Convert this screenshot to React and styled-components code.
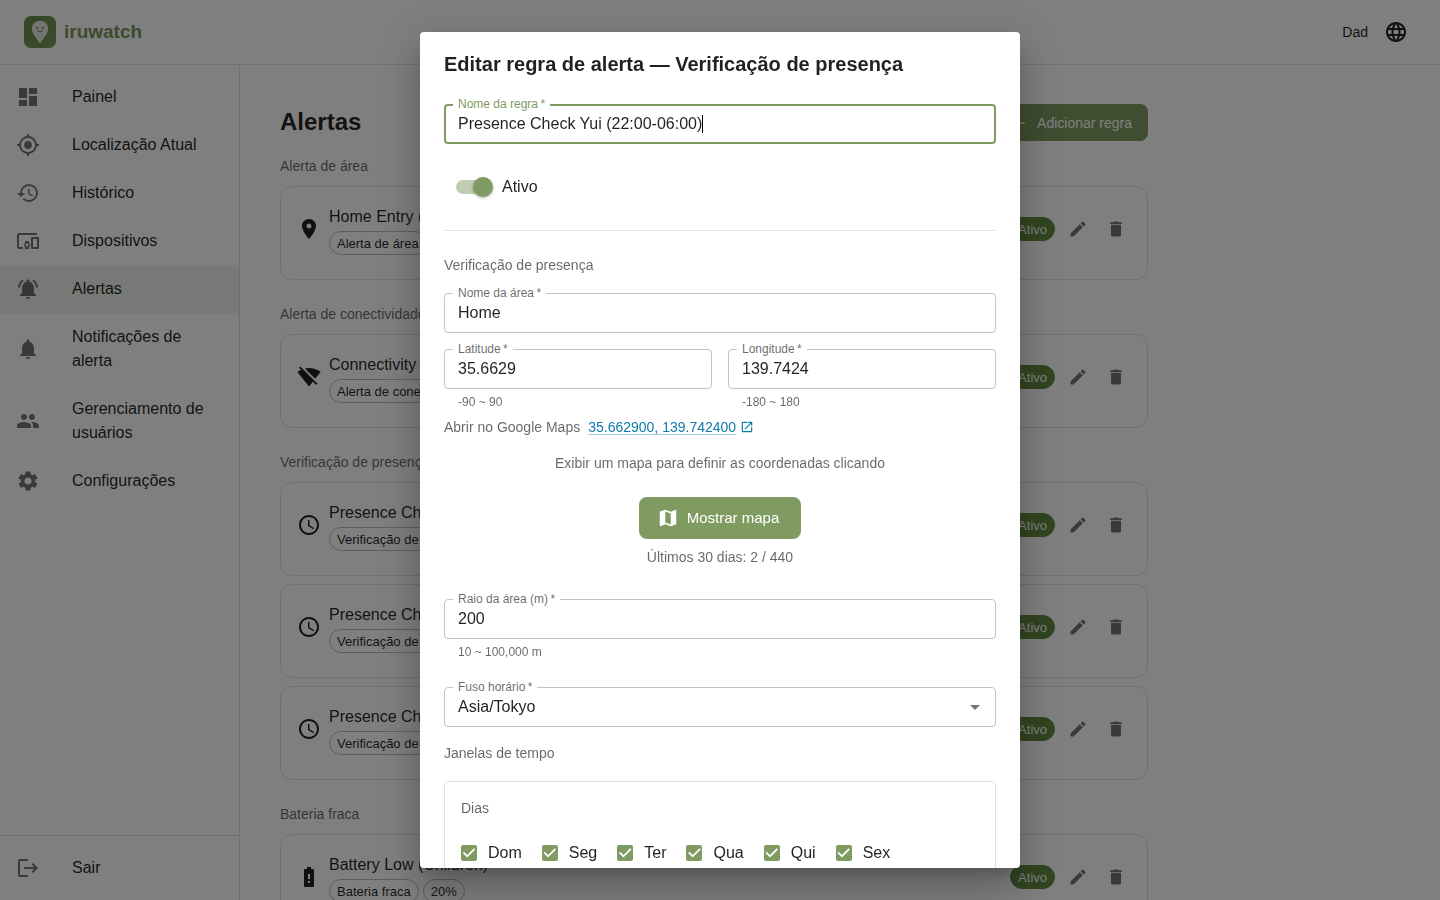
import React from "react";
import styled, { createGlobalStyle } from "styled-components";
import {
  MdDashboard, MdMyLocation, MdHistory, MdDevicesOther, MdNotificationsActive, MdNotifications,
  MdPeople, MdSettings, MdLocationOn, MdSignalWifiOff, MdAccessTime, MdBatteryAlert, MdEdit,
  MdDelete, MdLanguage, MdMap, MdOpenInNew, MdAdd, MdArrowDropDown,
} from "react-icons/md";

const green = "#7f9b61";
const ink = "rgba(0, 0, 0, 0.87)";
const muted = "rgba(0, 0, 0, 0.6)";
const line = "rgba(0, 0, 0, 0.12)";

const GlobalStyle = createGlobalStyle`
  *, *::before, *::after { box-sizing: border-box; }
  body {
    margin: 0;
    background: #fff;
    color: ${ink};
    font-family: "Liberation Sans", Arial, sans-serif;
    font-size: 16px;
    line-height: 24px;
  }
  h1, h2, h3, p, ul { margin: 0; padding: 0; }
  ul { list-style: none; }
  button, input, select { font: inherit; color: inherit; }
  svg { display: block; flex: none; }
`;

const Shell = styled.div`
  display: flex;
  flex-direction: column;
  height: 100vh;
  overflow: hidden;
`;

const Header = styled.header`
  display: flex;
  align-items: center;
  flex: none;
  height: 65px;
  padding: 0 24px;
  border-bottom: 1px solid ${line};
`;

const Brand = styled.a`
  display: flex;
  align-items: center;
  gap: 8px;
  margin-right: auto;
  color: #7a955a;
  font-size: 19px;
  font-weight: 700;
  text-decoration: none;
`;

const UserName = styled.span`
  margin-right: 8px;
  font-size: 14px;
`;

const IconButton = styled.button`
  display: grid;
  place-items: center;
  width: ${(p) => p.$size}px;
  height: ${(p) => p.$size}px;
  padding: 0;
  border: 0;
  border-radius: 50%;
  background: none;
  color: ${(p) => (p.$strong ? ink : "rgba(0, 0, 0, 0.54)")};
`;

const Body = styled.div`
  display: flex;
  flex: 1;
  min-height: 0;
`;

const Sidebar = styled.nav`
  display: flex;
  flex-direction: column;
  justify-content: space-between;
  flex: none;
  width: 240px;
  border-right: 1px solid ${line};
`;

const NavList = styled.ul`
  && { padding: 8px 0; }
  border-top: ${(p) => (p.$divided ? `1px solid ${line}` : "0")};
`;

const NavLink = styled.a`
  display: flex;
  align-items: center;
  gap: 32px;
  padding: 12px 16px;
  background: ${(p) => (p.$active ? "rgba(127, 155, 97, 0.12)" : "none")};
  color: inherit;
  text-decoration: none;
  svg { color: rgba(0, 0, 0, 0.54); }
`;

const Main = styled.main`
  flex: 1;
  min-width: 0;
  padding: 39px 40px;
  overflow: hidden;
`;

const Content = styled.div`
  display: flex;
  flex-direction: column;
  gap: 24px;
  max-width: 868px;
`;

const PageTop = styled.div`
  display: flex;
  align-items: center;
  justify-content: space-between;
  margin-bottom: -9px;
`;

const PageTitle = styled.h1`
  && { padding-bottom: 2px; }
  font-size: 24px;
  line-height: 32px;
`;

const Button = styled.button`
  display: inline-flex;
  align-items: center;
  gap: 8px;
  height: ${(p) => (p.$large ? 42 : 37)}px;
  padding: ${(p) => (p.$large ? "0 22px 0 18px" : "0 16px 0 12px")};
  border: 0;
  border-radius: 8px;
  background: ${green};
  color: #fff;
  font-size: ${(p) => (p.$large ? 15 : 14)}px;
`;

const Group = styled.section`
  display: flex;
  flex-direction: column;
  gap: 8px;
`;

const SectionLabel = styled.h3`
  && { padding-bottom: 2px; }
  color: ${muted};
  font-size: 14px;
  font-weight: 400;
  line-height: 20px;
`;

const RuleCard = styled.article`
  display: flex;
  align-items: center;
  gap: 8px;
  padding: 16px 16px 24px;
  border: 1px solid ${line};
  border-radius: 12px;
`;

const RuleText = styled.div`
  flex: 1;
  min-width: 0;
`;

const RuleName = styled.p`
  line-height: 28px;
`;

const Chips = styled.div`
  display: flex;
  gap: 4px;
`;

const Chip = styled.span`
  padding: 2px 7px 0;
  border: 1px solid ${(p) => (p.$filled ? "#648c42" : "rgba(0, 0, 0, 0.26)")};
  border-radius: 12px;
  background: ${(p) => (p.$filled ? "#648c42" : "none")};
  color: ${(p) => (p.$filled ? "#fff" : ink)};
  font-size: 13px;
  line-height: 20px;
`;

const Backdrop = styled.div`
  position: fixed;
  inset: 0;
  display: flex;
  align-items: center;
  justify-content: center;
  padding: 32px;
  background: rgba(0, 0, 0, 0.5);
`;

const Dialog = styled.div`
  display: flex;
  flex-direction: column;
  width: 100%;
  max-width: 600px;
  max-height: 100%;
  border-radius: 4px;
  background: #fff;
  box-shadow: 0 11px 15px -7px rgba(0, 0, 0, 0.2), 0 24px 38px 3px rgba(0, 0, 0, 0.14),
    0 9px 46px 8px rgba(0, 0, 0, 0.12);
  overflow: hidden;
`;

const DialogTitle = styled.h2`
  && { padding: 16px 24px; }
  font-size: 20px;
  line-height: 32px;
`;

const DialogBody = styled.form`
  display: flex;
  flex-direction: column;
  gap: 24px;
  padding: 8px 24px 20px;
  overflow-y: auto;
  scrollbar-width: none;
  > * { flex: none; }
`;

const Stack = styled.div`
  display: flex;
  flex-direction: column;
  gap: 16px;
`;

const Columns = styled.div`
  display: grid;
  grid-template-columns: 1fr 1fr;
  gap: 16px;
`;

const Outline = styled.div`
  position: relative;
  display: flex;
  align-items: center;
  height: 40px;
  padding: 0 ${(p) => (p.$focused ? 12 : 13)}px;
  border: ${(p) => (p.$focused ? `2px solid ${green}` : "1px solid rgba(0, 0, 0, 0.23)")};
  border-radius: 4px;
`;

const FieldLabel = styled.label`
  position: absolute;
  top: ${(p) => (p.$focused ? -12 : -11)}px;
  left: ${(p) => (p.$focused ? 7 : 8)}px;
  padding: 0 5px;
  background: #fff;
  color: ${(p) => (p.$focused ? green : muted)};
  font-size: 12px;
  line-height: 20px;
`;

const TextInput = styled.input`
  width: 100%;
  height: 24px;
  padding: 0;
  border: 0;
  outline: 0;
  background: none;
`;

const FocusedInput = styled(TextInput)`
  width: auto;
  field-sizing: content;
  caret-color: transparent;
`;

const Caret = styled.span`
  width: 1px;
  height: 18px;
  background: #000;
`;

const Select = styled.select`
  width: 100%;
  height: 24px;
  padding: 0;
  border: 0;
  outline: 0;
  background: none;
  appearance: none;
`;

const SelectArrow = styled(MdArrowDropDown)`
  margin-right: -5px;
  color: rgba(0, 0, 0, 0.54);
`;

const Helper = styled.p`
  margin: 3px 14px 1px;
  color: ${muted};
  font-size: 12px;
  line-height: 20px;
`;

const SwitchRow = styled.label`
  display: flex;
  align-items: center;
  gap: 9px;
  height: 38px;
  padding-left: 12px;
`;

const SwitchInput = styled.input`
  appearance: none;
  display: grid;
  align-items: center;
  width: 37px;
  height: 20px;
  margin: 0;
  &::before,
  &::after {
    content: "";
    grid-area: 1 / 1;
  }
  &::before {
    width: 34px;
    height: 14px;
    border-radius: 7px;
    background: #bfcdb0;
  }
  &::after {
    justify-self: end;
    width: 20px;
    height: 20px;
    border-radius: 50%;
    background: ${green};
    box-shadow: 0 1px 3px rgba(0, 0, 0, 0.3);
  }
`;

const Divider = styled.hr`
  width: 100%;
  height: 1px;
  margin: 0;
  border: 0;
  background: ${line};
`;

const MapsRow = styled.div`
  display: flex;
  gap: 8px;
  margin-top: -12px;
  color: ${muted};
  font-size: 14px;
  line-height: 20px;
`;

const MapsLink = styled.a`
  display: flex;
  align-items: center;
  gap: 4px;
  color: #0d7bab;
  text-underline-offset: 2px;
  text-decoration-color: rgba(13, 123, 171, 0.4);
`;

const MapPanel = styled.div`
  display: flex;
  flex-direction: column;
  align-items: center;
  gap: 8px;
  margin-bottom: 8px;
`;

const Note = styled.p`
  margin-bottom: ${(p) => (p.$spaced ? 16 : 0)}px;
  color: ${muted};
  font-size: 14px;
  line-height: 20px;
`;

const Windows = styled(Stack)`
  margin-top: -8px;
`;

const WindowBox = styled.div`
  display: flex;
  flex-direction: column;
  gap: 14px;
  padding: 16px;
  border: 1px solid ${line};
  border-radius: 4px;
`;

const Days = styled.div`
  display: flex;
  flex-wrap: wrap;
  gap: 20px;
`;

const DayLabel = styled.label`
  display: flex;
  align-items: center;
  gap: 11px;
  height: 38px;
`;

const DayCheck = styled.input`
  appearance: none;
  width: 16px;
  height: 16px;
  margin: 0;
  border-radius: 2px;
  background: ${green};
  &::before {
    content: "";
    display: block;
    height: 100%;
    background: #fff;
    clip-path: polygon(39% 78%, 11% 50%, 19% 42%, 39% 62%, 81% 20%, 89% 28%);
  }
`;

function LogoMark() {
  return (
    <svg width="32" height="32" viewBox="0 0 32 32" aria-hidden="true">
      <defs>
        <linearGradient id="leaf" x1="0" y1="0" x2="1" y2="1">
          <stop offset="0" stopColor="#688a42" />
          <stop offset="1" stopColor="#7c995c" />
        </linearGradient>
      </defs>
      <rect width="32" height="32" rx="7" fill="url(#leaf)" />
      <path d="M16 4.700c-4.700 0-8.100 3.400-8.100 7.700 0 5.800 5.700 10.600 8.100 15.100 2.400-4.500 8.100-9.300 8.100-15.100 0-4.300-3.400-7.700-8.100-7.700z" fill="#e9ebe5" />
      <circle cx="13.100" cy="11.800" r=".9" fill="#54604a" />
      <circle cx="18.900" cy="11.800" r=".9" fill="#54604a" />
      <path d="M13.300 14.400c1.400 1.900 4 1.900 5.400 0" fill="none" stroke="#54604a" strokeWidth=".9" strokeLinecap="round" />
    </svg>
  );
}

function LogoutIcon({ size }) {
  return (
    <svg width={size} height={size} viewBox="0 0 24 24" fill="currentColor" aria-hidden="true">
      <path d="m17 7-1.410 1.410L18.170 11H8v2h10.170l-2.580 2.580L17 17l5-5zM4 5h8V3H4c-1.100 0-2 .9-2 2v14c0 1.100.9 2 2 2h8v-2H4V5z" />
    </svg>
  );
}

const navItems = [
  ["Painel", MdDashboard],
  ["Localização Atual", MdMyLocation],
  ["Histórico", MdHistory],
  ["Dispositivos", MdDevicesOther],
  ["Alertas", MdNotificationsActive],
  ["Notificações de alerta", MdNotifications],
  ["Gerenciamento de usuários", MdPeople],
  ["Configurações", MdSettings],
];

const groups = [
  { title: "Alerta de área", icon: MdLocationOn, rules: [["Home Entry (Children)", "Alerta de área"]] },
  { title: "Alerta de conectividade", icon: MdSignalWifiOff, rules: [["Connectivity", "Alerta de conectividade"]] },
  {
    title: "Verificação de presença",
    icon: MdAccessTime,
    rules: [
      ["Presence Check", "Verificação de presença"],
      ["Presence Check", "Verificação de presença"],
      ["Presence Check", "Verificação de presença"],
    ],
  },
  { title: "Bateria fraca", icon: MdBatteryAlert, rules: [["Battery Low (Children)", "Bateria fraca", "20%"]] },
];

const days = ["Dom", "Seg", "Ter", "Qua", "Qui", "Sex"];

function NavItem({ label, icon: Icon, active }) {
  return (
    <li>
      <NavLink href="#" $active={active} aria-current={active ? "page" : undefined}>
        <Icon size={24} />
        {label}
      </NavLink>
    </li>
  );
}

function Rule({ icon: Icon, name, chips }) {
  return (
    <RuleCard>
      <Icon size={24} />
      <RuleText>
        <RuleName>{name}</RuleName>
        <Chips>{chips.map((c) => <Chip key={c}>{c}</Chip>)}</Chips>
      </RuleText>
      <Chip $filled>Ativo</Chip>
      <IconButton type="button" $size={30} aria-label="Editar"><MdEdit size={20} /></IconButton>
      <IconButton type="button" $size={30} aria-label="Excluir"><MdDelete size={20} /></IconButton>
    </RuleCard>
  );
}

function Field({ id, label, value, helper }) {
  return (
    <div>
      <Outline>
        <FieldLabel htmlFor={id}>{label}&#8201;*</FieldLabel>
        <TextInput id={id} defaultValue={value} />
      </Outline>
      {helper && <Helper>{helper}</Helper>}
    </div>
  );
}

export default function App() {
  return (
    <>
      <GlobalStyle />
      <Shell>
        <Header>
          <Brand href="#"><LogoMark />iruwatch</Brand>
          <UserName>Dad</UserName>
          <IconButton type="button" $size={40} $strong aria-label="Idioma"><MdLanguage size={24} /></IconButton>
        </Header>
        <Body>
          <Sidebar>
            <NavList>
              {navItems.map(([label, icon]) => (
                <NavItem key={label} label={label} icon={icon} active={label === "Alertas"} />
              ))}
            </NavList>
            <NavList $divided>
              <NavItem label="Sair" icon={LogoutIcon} />
            </NavList>
          </Sidebar>
          <Main>
            <Content>
              <PageTop>
                <PageTitle>Alertas</PageTitle>
                <Button type="button"><MdAdd size={20} />Adicionar regra</Button>
              </PageTop>
              {groups.map((g) => (
                <Group key={g.title}>
                  <SectionLabel>{g.title}</SectionLabel>
                  {g.rules.map(([name, ...chips], i) => (
                    <Rule key={i} icon={g.icon} name={name} chips={chips} />
                  ))}
                </Group>
              ))}
            </Content>
          </Main>
        </Body>
      </Shell>
      <Backdrop>
        <Dialog role="dialog" aria-modal="true" aria-labelledby="dialog-title">
          <DialogTitle id="dialog-title">Editar regra de alerta — Verificação de presença</DialogTitle>
          <DialogBody>
            <Outline $focused>
              <FieldLabel htmlFor="rule-name" $focused>Nome da regra&#8201;*</FieldLabel>
              <FocusedInput id="rule-name" defaultValue="Presence Check Yui (22:00-06:00)" />
              <Caret />
            </Outline>
            <SwitchRow>
              <SwitchInput type="checkbox" role="switch" defaultChecked />
              Ativo
            </SwitchRow>
            <Divider />
            <Stack>
              <SectionLabel>Verificação de presença</SectionLabel>
              <Field id="area-name" label="Nome da área" value="Home" />
              <Columns>
                <Field id="latitude" label="Latitude" value="35.6629" helper="-90 ~ 90" />
                <Field id="longitude" label="Longitude" value="139.7424" helper="-180 ~ 180" />
              </Columns>
              <MapsRow>
                Abrir no Google Maps
                <MapsLink href="#">35.662900, 139.742400<MdOpenInNew size={14} /></MapsLink>
              </MapsRow>
              <MapPanel>
                <Note $spaced>Exibir um mapa para definir as coordenadas clicando</Note>
                <Button type="button" $large><MdMap size={22} />Mostrar mapa</Button>
                <Note>Últimos 30 dias: 2 / 440</Note>
              </MapPanel>
            </Stack>
            <Field id="radius" label="Raio da área (m)" value="200" helper="10 ~ 100,000 m" />
            <Outline>
              <FieldLabel htmlFor="timezone">Fuso horário&#8201;*</FieldLabel>
              <Select id="timezone" defaultValue="Asia/Tokyo">
                <option>Asia/Tokyo</option>
              </Select>
              <SelectArrow size={24} />
            </Outline>
            <Windows>
              <SectionLabel>Janelas de tempo</SectionLabel>
              <WindowBox>
                <SectionLabel>Dias</SectionLabel>
                <Days>
                  {days.map((d) => (
                    <DayLabel key={d}>
                      <DayCheck type="checkbox" defaultChecked />
                      {d}
                    </DayLabel>
                  ))}
                </Days>
              </WindowBox>
            </Windows>
          </DialogBody>
        </Dialog>
      </Backdrop>
    </>
  );
}
